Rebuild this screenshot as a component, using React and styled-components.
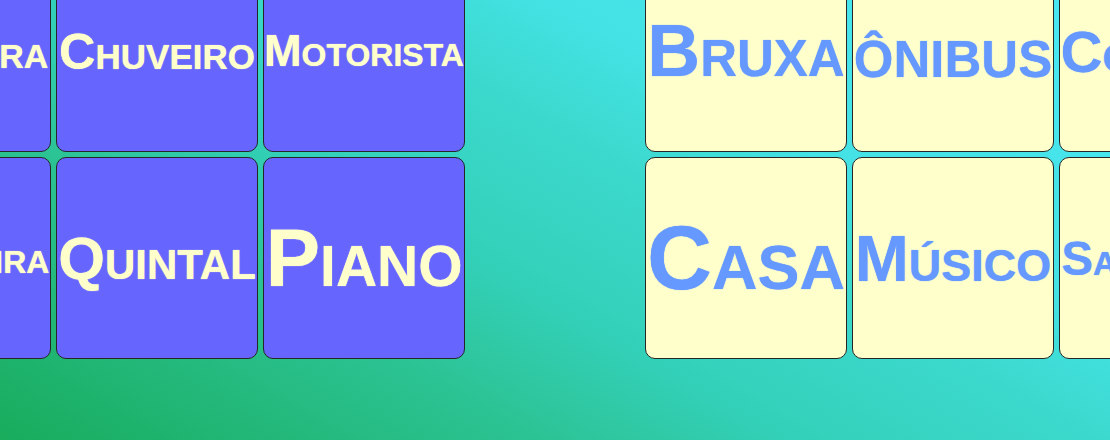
import React, { useLayoutEffect, useRef, useState } from 'react'
import styled, { createGlobalStyle } from 'styled-components'

const GlobalStyle = createGlobalStyle`
    html, body {
        margin: 0;
        padding: 0;
    }
    body {
        font-family: "Liberation Sans", Arial, sans-serif;
    }
`

const Page = styled.div`
    width: 1110px;
    height: 440px;
    overflow: hidden;
    background: linear-gradient(30deg, #18ac5c 0%, #2cc394 29%, #33d0b8 42%, #3cdacf 60%, #44e2e4 70%, #4ae8f4 100%);
`

// the board is scrolled a little: part of it sits above and left of the window
const Board = styled.div`
    display: flex;
    gap: 180px;
    margin: -50px 0 0 -151px;
`

const Deck = styled.div`
    display: grid;
    grid-template-columns: repeat(3, 202px);
    grid-auto-rows: 202px;
    gap: 5px;
    flex-shrink: 0;
`

const Card = styled.div`
    box-sizing: border-box;
    display: flex;
    align-items: center;
    justify-content: center;
    border: 1px solid #262626;
    border-radius: 10px;
    background-color: ${p => p.$tone === 'blue' ? '#6666ff' : '#ffffcc'};
    color: ${p => p.$tone === 'blue' ? '#ffffcc' : '#6699ff'};
`

const Word = styled.span`
    display: inline-block;
    font-weight: bold;
    font-variant: small-caps;
    white-space: nowrap;
    line-height: normal;
    text-shadow: 0 0 1px currentColor;
`

const FIT = 198

function FitWord({ text }) {
    const ref = useRef(null)
    const [size, setSize] = useState(100)

    useLayoutEffect(() => {
        const w = ref.current.getBoundingClientRect().width
        if (w > 0) setSize(100 * FIT / w)
    }, [text])

    return <Word ref={ref} style={{ fontSize: size + 'px' }}>{text}</Word>
}

const decks = [
    {
        tone: 'blue',
        words: ['Lavadora', 'Chuveiro', 'Motorista', 'Geladeira', 'Quintal', 'Piano'],
    },
    {
        tone: 'cream',
        words: ['Bruxa', 'ônibus', 'Cozinha', 'Casa', 'Músico', 'Sapateiro'],
    },
]

function App() {
    return (
        <Page>
            <GlobalStyle />
            <Board>
                {decks.map(deck => (
                    <Deck key={deck.tone}>
                        {deck.words.map(w => (
                            <Card key={w} $tone={deck.tone}>
                                <FitWord text={w} />
                            </Card>
                        ))}
                    </Deck>
                ))}
            </Board>
        </Page>
    )
}

export default App
